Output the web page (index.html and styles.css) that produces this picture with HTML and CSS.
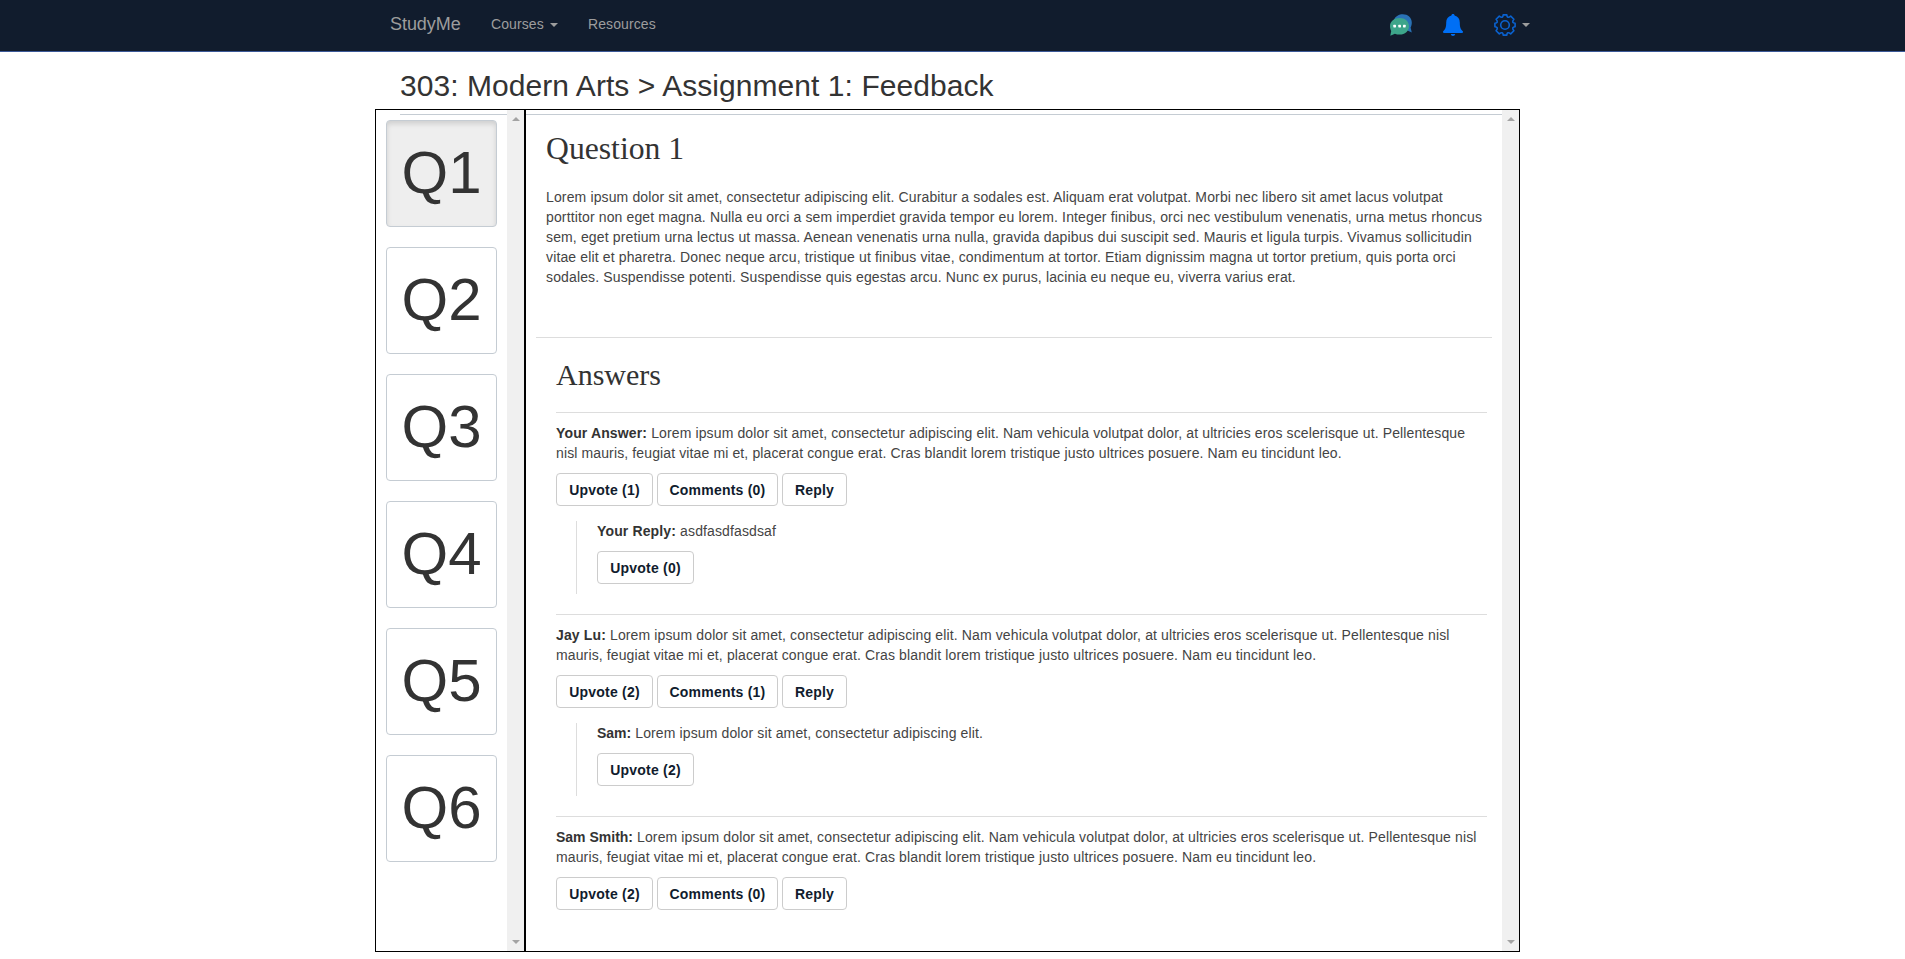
FILE: index.html
```html
<!DOCTYPE html>
<html lang="en">
<head>
<meta charset="utf-8">
<title>StudyMe</title>
<link rel="stylesheet" href="styles.css">
</head>
<body>
<nav class="navbar">
  <div class="nav-inner">
    <a class="brand">StudyMe</a>
    <a class="nav-link courses">Courses <span class="caret"></span></a>
    <a class="nav-link">Resources</a>
    <div class="nav-icons">
      <svg class="icon chat" width="22" height="22" viewBox="0 0 22 22">
        <path d="M4 5.500C5.500 2.200 9 .2 12.800.2c5 0 9 3.500 9 8.200 0 2.200-.5 3.600-1.200 5l1.200 5-4.400-2z" fill="#2a72b5"/>
        <path d="M9.700 4C4.300 4 0 7.500 0 12c0 2 .6 3.700 1.200 5L.3 21.800l4.600-2c1.400.6 3 .8 4.800.8 5.300 0 9.300-3.700 9.300-8.400S15 4 9.700 4z" fill="#3da58a"/>
        <g fill="#fff"><rect x="3.300" y="10.700" width="2.700" height="2.700" rx=".6"/><rect x="8.300" y="10.700" width="2.700" height="2.700" rx=".6"/><rect x="13" y="10.700" width="2.700" height="2.700" rx=".6"/></g>
      </svg>
      <svg class="icon bell" width="20" height="22" viewBox="0 0 20 22">
        <path d="M10 0c-1.100 0-1.600.7-1.600 1.600C5 2.300 3.200 5 3.200 8.500c0 5-.9 7-3 8.700-.6.700-.2 1.800.8 1.800h18c1 0 1.400-1.100.8-1.800-2.100-1.700-3-3.700-3-8.700C16.800 5 15 2.300 11.600 1.600 11.600.7 11.100 0 10 0zM7.800 20c.2 1.200 1 2 2.200 2s2-.8 2.200-2z" fill="#006ff5"/>
      </svg>
      <svg class="icon gear" width="22" height="22" viewBox="0 0 22 22" fill="none" stroke="#0a62d0" stroke-width="1.600" stroke-linejoin="round">
        <path d="M9.200.9h3.600c.1 2.500 1.400 3.300 3.900 1.200l3.200 3.200c-2.100 2.500-1.300 3.800 1.200 3.900v3.600c-2.500.1-3.300 1.400-1.200 3.900l-3.200 3.200c-2.500-2.100-3.800-1.300-3.900 1.200H9.200c-.1-2.500-1.400-3.300-3.900-1.200l-3.200-3.200c2.100-2.500 1.300-3.800-1.200-3.900V9.200c2.500-.1 3.300-1.400 1.200-3.900l3.200-3.200c2.500 2.100 3.800 1.300 3.900-1.200z"/>
        <circle cx="11" cy="11" r="4.300"/>
      </svg>
      <span class="caret"></span>
    </div>
  </div>
</nav>
<main class="container">
  <h1 class="title">303: Modern Arts &gt; Assignment 1: Feedback</h1>
  <div class="panels">
    <aside class="questions">
      <div class="rule side-rule"></div>
      <div class="q-list">
        <button class="q active">Q1</button>
        <button class="q">Q2</button>
        <button class="q">Q3</button>
        <button class="q">Q4</button>
        <button class="q">Q5</button>
        <button class="q">Q6</button>
      </div>
      <div class="scroll"><i class="up"></i><i class="down"></i></div>
    </aside>
    <section class="content">
      <div class="body">
        <div class="rule"></div>
        <div class="question">
          <h2 class="q-title">Question 1</h2>
          <p class="text prompt">Lorem ipsum dolor sit amet, consectetur adipiscing elit. Curabitur a sodales est. Aliquam erat volutpat. Morbi nec libero sit amet lacus volutpat<br>porttitor non eget magna. Nulla eu orci a sem imperdiet gravida tempor eu lorem. Integer finibus, orci nec vestibulum venenatis, urna metus rhoncus<br>sem, eget pretium urna lectus ut massa. Aenean venenatis urna nulla, gravida dapibus dui suscipit sed. Mauris et ligula turpis. Vivamus sollicitudin<br>vitae elit et pharetra. Donec neque arcu, tristique ut finibus vitae, condimentum at tortor. Etiam dignissim magna ut tortor pretium, quis porta orci<br>sodales. Suspendisse potenti. Suspendisse quis egestas arcu. Nunc ex purus, lacinia eu neque eu, viverra varius erat.</p>
        </div>
        <div class="answers">
          <h2 class="a-title">Answers</h2>
          <article class="answer">
            <p class="text"><b>Your Answer:</b> Lorem ipsum dolor sit amet, consectetur adipiscing elit. Nam vehicula volutpat dolor, at ultricies eros scelerisque ut. Pellentesque<br>nisl mauris, feugiat vitae mi et, placerat congue erat. Cras blandit lorem tristique justo ultrices posuere. Nam eu tincidunt leo.</p>
            <div class="actions"><button class="btn upvote">Upvote (1)</button><button class="btn comments">Comments (0)</button><button class="btn reply-btn">Reply</button></div>
            <div class="reply">
              <p class="text"><b>Your Reply:</b> asdfasdfasdsaf</p>
              <div class="actions"><button class="btn upvote">Upvote (0)</button></div>
            </div>
          </article>
          <article class="answer">
            <p class="text"><b>Jay Lu:</b> Lorem ipsum dolor sit amet, consectetur adipiscing elit. Nam vehicula volutpat dolor, at ultricies eros scelerisque ut. Pellentesque nisl<br>mauris, feugiat vitae mi et, placerat congue erat. Cras blandit lorem tristique justo ultrices posuere. Nam eu tincidunt leo.</p>
            <div class="actions"><button class="btn upvote">Upvote (2)</button><button class="btn comments">Comments (1)</button><button class="btn reply-btn">Reply</button></div>
            <div class="reply">
              <p class="text"><b class="tight">Sam:</b> Lorem ipsum dolor sit amet, consectetur adipiscing elit.</p>
              <div class="actions"><button class="btn upvote">Upvote (2)</button></div>
            </div>
          </article>
          <article class="answer">
            <p class="text"><b class="tight">Sam Smith:</b> Lorem ipsum dolor sit amet, consectetur adipiscing elit. Nam vehicula volutpat dolor, at ultricies eros scelerisque ut. Pellentesque nisl<br>mauris, feugiat vitae mi et, placerat congue erat. Cras blandit lorem tristique justo ultrices posuere. Nam eu tincidunt leo.</p>
            <div class="actions"><button class="btn upvote">Upvote (2)</button><button class="btn comments">Comments (0)</button><button class="btn reply-btn">Reply</button></div>
          </article>
        </div>
      </div>
      <div class="scroll"><i class="up"></i><i class="down"></i></div>
    </section>
  </div>
</main>
</body>
</html>
```
FILE: styles.css
```css
* { box-sizing: border-box; }
body {
  margin: 0;
  background: #fff;
  color: #333;
  font: 14px/20px "Liberation Sans", Arial, sans-serif;
}
h1, h2, p { margin: 0; font-weight: normal; white-space: nowrap; }

.navbar {
  height: 52px;
  background: #111c2d;
  border-bottom: 1px solid #3b5998;
}
.nav-inner {
  display: flex;
  align-items: center;
  width: 1140px;
  height: 48px;
  margin-left: 390px;
  color: #9d9d9d;
}
.brand { font-size: 18px; width: 101px; letter-spacing: -0.05px; }
.nav-link { letter-spacing: 0.1px; }
.courses { width: 97px; }
.caret {
  display: inline-block;
  border: 4px solid transparent;
  border-top-color: #9d9d9d;
  border-bottom: 0;
  margin-left: 2px;
  vertical-align: middle;
}
.nav-icons {
  display: flex;
  align-items: center;
  margin: 2px 0 0 auto;
  height: 22px;
}
.icon { display: block; }
.bell { margin: 0 31px; }
.nav-icons .caret { margin-left: 6px; }

.container { width: 1145px; margin-left: 375px; }
.title {
  height: 57px;
  padding: 17px 0 0 25px;
  font-size: 30px;
  line-height: 33px;
  letter-spacing: 0.06px;
}
.panels { display: flex; height: 843px; }
.questions, .content {
  display: flex;
  border: 1px solid #000;
}
.questions { width: 150px; position: relative; }
.side-rule { position: absolute; top: 4px; left: 24px; right: 17px; }
.content { width: 995px; }
.rule { height: 1px; background: #c5ccd3; }
.q-list {
  flex: 1;
  display: flex;
  flex-direction: column;
  gap: 20px;
  padding: 10px 10px 0;
}
.q {
  width: 111px;
  height: 107px;
  padding: 0 0 2px;
  border: 1px solid #c5ccd3;
  border-radius: 4px;
  background: #fff;
  color: #333;
  font: 60px/86px "Liberation Sans", Arial, sans-serif;
}
.q.active {
  background: #eee;
  box-shadow: inset 0 3px 5px rgba(0, 0, 0, 0.125);
}
.scroll {
  display: flex;
  flex-direction: column;
  justify-content: space-between;
  align-items: center;
  width: 17px;
  padding: 7px 0;
  background: #f0f0f0;
}
.up, .down { border: 4px solid transparent; }
.up { border-top: 0; border-bottom-color: #a3a3a3; }
.down { border-bottom: 0; border-top-color: #a3a3a3; }

.body { flex: 1; padding-top: 4px; }
.question {
  height: 223px;
  margin: 0 10px;
  padding: 16px 10px 0;
  border-bottom: 1px solid #ddd;
}
.q-title, .a-title {
  font-family: "Liberation Serif", "Times New Roman", serif;
  line-height: 36px;
}
.q-title { height: 56px; font-size: 31.7px; }
.answers { margin: 0 15px 0 30px; padding-top: 19px; }
.a-title { height: 55px; font-size: 30px; }
.answer { height: 202px; border-top: 1px solid #ddd; padding-top: 10px; }
.answer:last-child { height: auto; }
.text { color: #444; letter-spacing: 0.124px; }
.prompt { letter-spacing: 0.137px; }
.text b { color: #333; letter-spacing: 0.14px; }
.text .tight { letter-spacing: 0; }
.actions { display: flex; gap: 4px; padding-top: 10px; }
.btn {
  height: 33px;
  padding: 0;
  border: 1px solid #ccc;
  border-radius: 4px;
  background: #fff;
  color: #111c2d;
  font: bold 14px/20px "Liberation Sans", Arial, sans-serif;
  letter-spacing: 0.22px;
}
.upvote { width: 97px; }
.comments { width: 121px; }
.reply-btn { width: 65px; }
.reply {
  height: 73px;
  margin: 15px 0 0 20px;
  padding-left: 20px;
  border-left: 1px solid #ddd;
}
```
